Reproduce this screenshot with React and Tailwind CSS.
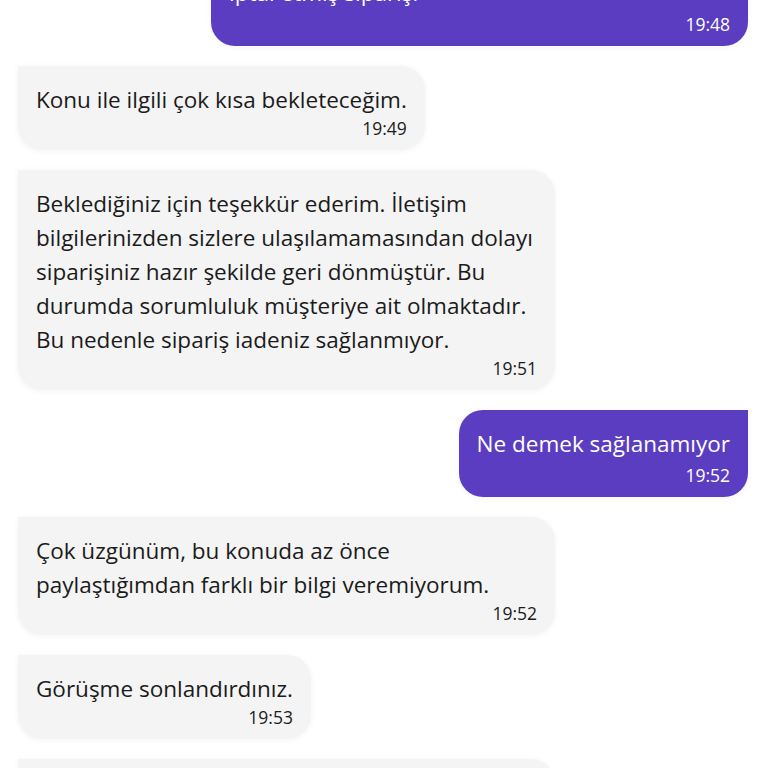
const messages = [
  { id: 1, out: true, lines: ['iptal etmiş siparişi'], time: '19:48', wide: true },
  { id: 2, out: false, lines: ['Konu ile ilgili çok kısa bekleteceğim.'], time: '19:49' },
  {
    id: 3,
    out: false,
    lines: [
      'Beklediğiniz için teşekkür ederim. İletişim bilgilerinizden sizlere ulaşılamamasından dolayı siparişiniz hazır şekilde geri dönmüştür. Bu durumda sorumluluk müşteriye ait olmaktadır. Bu nedenle sipariş iadeniz sağlanmıyor.',
    ],
    time: '19:51',
  },
  { id: 4, out: true, lines: ['Ne demek sağlanamıyor'], time: '19:52' },
  {
    id: 5,
    out: false,
    lines: ['Çok üzgünüm, bu konuda az önce paylaştığımdan farklı bir bilgi veremiyorum.'],
    time: '19:52',
  },
  { id: 6, out: false, lines: ['Görüşme sonlandırdınız.'], time: '19:53' },
  { id: 7, out: false, lines: ['Görüşmemizi değerlendirmek ister misiniz?'], time: '19:53', wide: true },
];

function Bubble({ msg }) {
  return (
    <div className={`flex ${msg.out ? 'justify-end' : 'justify-start'}`}>
      <div
        className={`max-w-[537px] rounded-[24px] pl-[18px] pr-[18px] pt-[17px] pb-[11px] shadow-[0_1px_6px_rgba(0,0,0,0.05)] ${
          msg.wide ? 'w-[537px]' : ''
        } ${
          msg.out
            ? 'bg-[#5a3dc1] text-white rounded-tr-none'
            : 'bg-[#f4f4f4] text-[#1b1b1b] rounded-tl-none'
        }`}
      >
        {msg.lines.map((l, i) => (
          <p key={i} className="text-[22.5px] leading-[34px] font-medium">{l}</p>
        ))}
        <div
          className={`text-right text-[17.5px] leading-[22px] font-medium ${msg.out ? 'mt-[3px]' : ''}`}
        >
          {msg.time}
        </div>
      </div>
    </div>
  );
}

export default function App() {
  return (
    <div
      className="w-[768px] h-[768px] overflow-hidden bg-white"
      style={{ fontFamily: '"Open Sans", "Noto Sans", sans-serif' }}
    >
      <div className="flex flex-col gap-[20px] pl-[18px] pr-[20px] mt-[-41px]">
        {messages.map((m) => (
          <Bubble key={m.id} msg={m} />
        ))}
      </div>
    </div>
  );
}
